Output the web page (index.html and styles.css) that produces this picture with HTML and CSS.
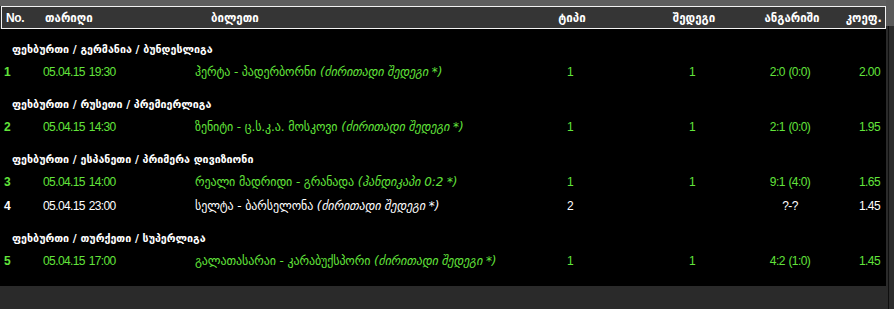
FILE: index.html
```html
<!DOCTYPE html>
<html lang="ka">
<head>
<meta charset="utf-8">
<title>ბილეთები</title>
<link rel="stylesheet" href="styles.css">
</head>
<body>
<div class="page">
  <div class="main">
    <div class="topbar"></div>
    <div class="thead cols">
      <div class="c-no">No.</div>
      <div class="c-date">თარიღი</div>
      <div class="c-ticket hd-ticket">ბილეთი</div>
      <div class="c-mid">ტიპი</div>
      <div class="c-mid">შედეგი</div>
      <div class="c-mid">ანგარიში</div>
      <div class="c-right">კოეფ.</div>
    </div>
    <div class="tbody">
      <div class="group">ფეხბურთი / გერმანია / ბუნდესლიგა</div>
      <div class="row cols green">
        <div class="c-no">1</div>
        <div class="c-date">05.04.15 19:30</div>
        <div class="c-ticket">ჰერტა - პადერბორნი <i>(ძირითადი შედეგი *)</i></div>
        <div class="c-mid">1</div>
        <div class="c-mid">1</div>
        <div class="c-mid">2:0 (0:0)</div>
        <div class="c-right">2.00</div>
      </div>

      <div class="group">ფეხბურთი / რუსეთი / პრემიერლიგა</div>
      <div class="row cols green">
        <div class="c-no">2</div>
        <div class="c-date">05.04.15 14:30</div>
        <div class="c-ticket">ზენიტი - ც.ს.კ.ა. მოსკოვი <i>(ძირითადი შედეგი *)</i></div>
        <div class="c-mid">1</div>
        <div class="c-mid">1</div>
        <div class="c-mid">2:1 (0:0)</div>
        <div class="c-right">1.95</div>
      </div>

      <div class="group">ფეხბურთი / ესპანეთი / პრიმერა დივიზიონი</div>
      <div class="row cols green">
        <div class="c-no">3</div>
        <div class="c-date">05.04.15 14:00</div>
        <div class="c-ticket">რეალი მადრიდი - გრანადა <i>(ჰანდიკაპი 0:2 *)</i></div>
        <div class="c-mid">1</div>
        <div class="c-mid">1</div>
        <div class="c-mid">9:1 (4:0)</div>
        <div class="c-right">1.65</div>
      </div>
      <div class="row cols white">
        <div class="c-no">4</div>
        <div class="c-date">05.04.15 23:00</div>
        <div class="c-ticket">სელტა - ბარსელონა <i>(ძირითადი შედეგი *)</i></div>
        <div class="c-mid">2</div>
        <div class="c-mid"></div>
        <div class="c-mid">?-?</div>
        <div class="c-right">1.45</div>
      </div>

      <div class="group">ფეხბურთი / თურქეთი / სუპერლიგა</div>
      <div class="row cols green">
        <div class="c-no">5</div>
        <div class="c-date">05.04.15 17:00</div>
        <div class="c-ticket">გალათასარაი - კარაბუქსპორი <i>(ძირითადი შედეგი *)</i></div>
        <div class="c-mid">1</div>
        <div class="c-mid">1</div>
        <div class="c-mid">4:2 (1:0)</div>
        <div class="c-right">1.45</div>
      </div>
    </div>
  </div>
  <div class="side">
    <div class="side-top"></div>
    <div class="side-track"></div>
  </div>
</div>
</body>
</html>
```

FILE: styles.css
```css
html, body {
  margin: 0;
  padding: 0;
}
body {
  background: #2a2a2a;
  font-family: "Liberation Sans", Arial, sans-serif;
  font-size: 12px;
  letter-spacing: -0.6px;
  word-spacing: 1px;
  color: #fff;
}
.page {
  display: flex;
  width: 894px;
  height: 309px;
}
.main {
  width: 886px;
  display: flex;
  flex-direction: column;
}
.topbar {
  height: 6px;
  background: #5e5e5e;
}
.cols {
  display: grid;
  grid-template-columns: 39px 152px 315px 120px 124px 72px 54px;
  align-items: center;
}
.thead {
  margin-left: 1px;
  height: 21px;
  border: 1px solid #f2f2f2;
  background: #353535;
  padding: 0 0 0 4px;
  width: 879px;
  font-family: "DejaVu Sans", sans-serif;
  font-weight: bold;
  font-size: 11.5px;
  letter-spacing: 0;
  word-spacing: 0;
  color: #fff;
}
.thead .c-no {
  font-family: "Liberation Sans", Arial, sans-serif;
  font-size: 12px;
  letter-spacing: -0.4px;
}
.hd-ticket {
  padding-left: 14px;
}
.tbody {
  background: #000;
  padding: 0 4px 13px 4px;
}
.group {
  height: 20px;
  padding-top: 11px;
  padding-left: 8px;
  line-height: 20px;
  font-family: "DejaVu Sans", sans-serif;
  font-weight: bold;
  font-size: 10.7px;
  letter-spacing: 0;
  word-spacing: 0;
  color: #fff;
}
.row {
  height: 24px;
  line-height: 24px;
  white-space: nowrap;
}
.row .c-ticket {
  font-family: "DejaVu Sans", sans-serif;
  font-size: 12px;
  letter-spacing: -0.1px;
  word-spacing: 0;
}
.row .c-no {
  font-weight: bold;
  font-size: 12px;
  letter-spacing: 0;
}
.c-mid {
  text-align: center;
}
.c-right {
  text-align: right;
}
.green {
  color: #62e43b;
}
.white {
  color: #fff;
}
.side {
  width: 8px;
  display: flex;
  flex-direction: column;
}
.side-top {
  height: 26px;
  background: #5a5a5a;
}
.side-track {
  flex: 1;
  margin-left: 2px;
  border-left: 1px solid #0e0e0e;
  background: #2c2c2c;
}
```
